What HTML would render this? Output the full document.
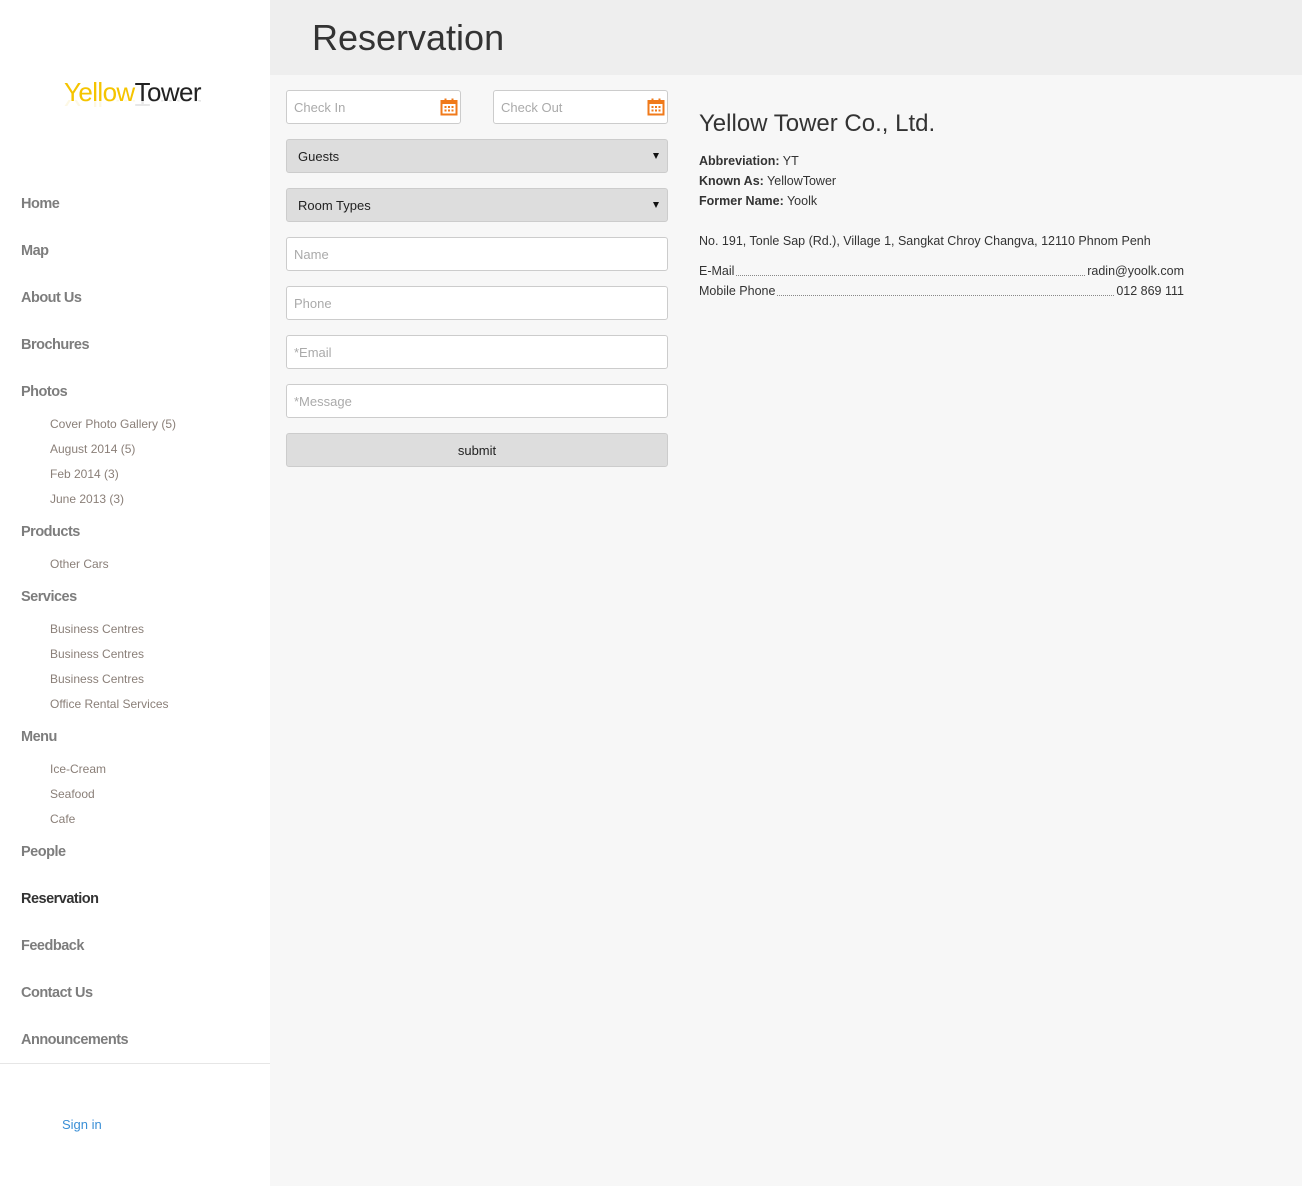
<!DOCTYPE html>
<html><head><meta charset="utf-8"><style>
*{margin:0;padding:0;box-sizing:border-box}
body{width:1302px;height:1186px;background:#f7f7f7;font-family:"Liberation Sans",sans-serif;position:relative;overflow:hidden}
.a{position:absolute;white-space:nowrap;line-height:20px;height:20px}
#side{position:absolute;left:0;top:0;width:270px;height:1186px;background:#fff}
.n{left:21px;font-size:14.5px;color:#7d7d7d;font-weight:bold;letter-spacing:-0.5px}
.s{left:50px;font-size:12px;color:#8a7f78;letter-spacing:0}
.box{position:absolute;background:#fff;border:1px solid #ccc;border-radius:3px;height:34px;font-size:13px;color:#aaa;padding-left:7px;line-height:34px}
.sel{position:absolute;background:#ddd;border:1px solid #ccc;border-radius:3px;height:34px;font-size:13px;color:#222;padding-left:11px;line-height:34px}
.sel:after{content:"";position:absolute;right:8px;top:13px;border-left:3.5px solid transparent;border-right:3.5px solid transparent;border-top:6px solid #111}
.cal{position:absolute;right:2px;top:7px}
.t{font-size:12.5px;color:#333}
</style></head><body>
<div id="side">
<div class="a" style="left:64px;top:77px;height:30px;line-height:30px;font-size:26px;letter-spacing:-0.6px"><span style="color:#f5c400">Yellow</span><span style="color:#222">Tower</span></div>
<div class="a" style="left:64px;top:100px;height:12px;line-height:30px;font-size:26px;letter-spacing:-0.6px;transform:scaleY(-1);opacity:.1;overflow:hidden"><span style="color:#f5c400">Yellow</span><span style="color:#222">Tower</span></div>
<div class="a n" style="top:194px">Home</div>
<div class="a n" style="top:241px">Map</div>
<div class="a n" style="top:288px">About Us</div>
<div class="a n" style="top:335px">Brochures</div>
<div class="a n" style="top:382px">Photos</div>
<div class="a s" style="top:414px">Cover Photo Gallery (5)</div>
<div class="a s" style="top:439px">August 2014 (5)</div>
<div class="a s" style="top:464px">Feb 2014 (3)</div>
<div class="a s" style="top:489px">June 2013 (3)</div>
<div class="a n" style="top:522px">Products</div>
<div class="a s" style="top:554px">Other Cars</div>
<div class="a n" style="top:587px">Services</div>
<div class="a s" style="top:619px">Business Centres</div>
<div class="a s" style="top:644px">Business Centres</div>
<div class="a s" style="top:669px">Business Centres</div>
<div class="a s" style="top:694px">Office Rental Services</div>
<div class="a n" style="top:727px">Menu</div>
<div class="a s" style="top:759px">Ice-Cream</div>
<div class="a s" style="top:784px">Seafood</div>
<div class="a s" style="top:809px">Cafe</div>
<div class="a n" style="top:842px">People</div>
<div class="a n" style="top:889px;color:#333">Reservation</div>
<div class="a n" style="top:936px">Feedback</div>
<div class="a n" style="top:983px">Contact Us</div>
<div class="a n" style="top:1030px">Announcements</div>
<div style="position:absolute;left:0;top:1063px;width:270px;height:1px;background:#e6e6e6"></div>
<div class="a" style="left:62px;top:1115px;font-size:13px;color:#3a8fd6">Sign in</div>
</div>
<div style="position:absolute;left:270px;top:0;width:1032px;height:75px;background:#eee"></div>
<div class="a" style="left:312px;top:16px;height:44px;line-height:44px;font-size:36px;color:#333">Reservation</div>

<div class="box" style="left:286px;top:90px;width:175px">Check In<svg class="cal" width="18" height="18" viewBox="0 0 18 18"><rect x="1.5" y="3" width="15" height="13.5" fill="none" stroke="#f07a1a" stroke-width="2"/><rect x="1.5" y="3" width="15" height="3" fill="#f07a1a"/><rect x="4.5" y="0.5" width="2" height="4" fill="#f07a1a"/><rect x="11.5" y="0.5" width="2" height="4" fill="#f07a1a"/><g fill="#f07a1a"><rect x="4.5" y="8" width="2" height="2"/><rect x="8" y="8" width="2" height="2"/><rect x="11.5" y="8" width="2" height="2"/><rect x="4.5" y="11.5" width="2" height="2"/><rect x="8" y="11.5" width="2" height="2"/><rect x="11.5" y="11.5" width="2" height="2"/></g></svg></div>
<div class="box" style="left:493px;top:90px;width:175px">Check Out<svg class="cal" width="18" height="18" viewBox="0 0 18 18"><rect x="1.5" y="3" width="15" height="13.5" fill="none" stroke="#f07a1a" stroke-width="2"/><rect x="1.5" y="3" width="15" height="3" fill="#f07a1a"/><rect x="4.5" y="0.5" width="2" height="4" fill="#f07a1a"/><rect x="11.5" y="0.5" width="2" height="4" fill="#f07a1a"/><g fill="#f07a1a"><rect x="4.5" y="8" width="2" height="2"/><rect x="8" y="8" width="2" height="2"/><rect x="11.5" y="8" width="2" height="2"/><rect x="4.5" y="11.5" width="2" height="2"/><rect x="8" y="11.5" width="2" height="2"/><rect x="11.5" y="11.5" width="2" height="2"/></g></svg></div>
<div class="sel" style="left:286px;top:139px;width:382px">Guests</div>
<div class="sel" style="left:286px;top:188px;width:382px">Room Types</div>
<div class="box" style="left:286px;top:237px;width:382px">Name</div>
<div class="box" style="left:286px;top:286px;width:382px">Phone</div>
<div class="box" style="left:286px;top:335px;width:382px">*Email</div>
<div class="box" style="left:286px;top:384px;width:382px">*Message</div>
<div class="box" style="left:286px;top:433px;width:382px;background:#ddd;color:#222;text-align:center;padding:0">submit</div>

<div class="a" style="left:699px;top:110px;height:28px;line-height:28px;font-size:24px;color:#333">Yellow Tower Co., Ltd.</div>
<div class="a t" style="left:699px;top:151px"><b>Abbreviation:</b> YT</div>
<div class="a t" style="left:699px;top:171px"><b>Known As:</b> YellowTower</div>
<div class="a t" style="left:699px;top:191px"><b>Former Name:</b> Yoolk</div>
<div class="a t" style="left:699px;top:231px">No. 191, Tonle Sap (Rd.), Village 1, Sangkat Chroy Changva, 12110 Phnom Penh</div>
<div class="a t" style="left:699px;top:261px;width:485px;display:flex"><span>E-Mail</span><span style="flex:1;border-bottom:1px dotted #888;margin:0 2px 5px"></span><span>radin@yoolk.com</span></div>
<div class="a t" style="left:699px;top:281px;width:485px;display:flex"><span>Mobile Phone</span><span style="flex:1;border-bottom:1px dotted #888;margin:0 2px 5px"></span><span>012 869 111</span></div>
</body></html>
